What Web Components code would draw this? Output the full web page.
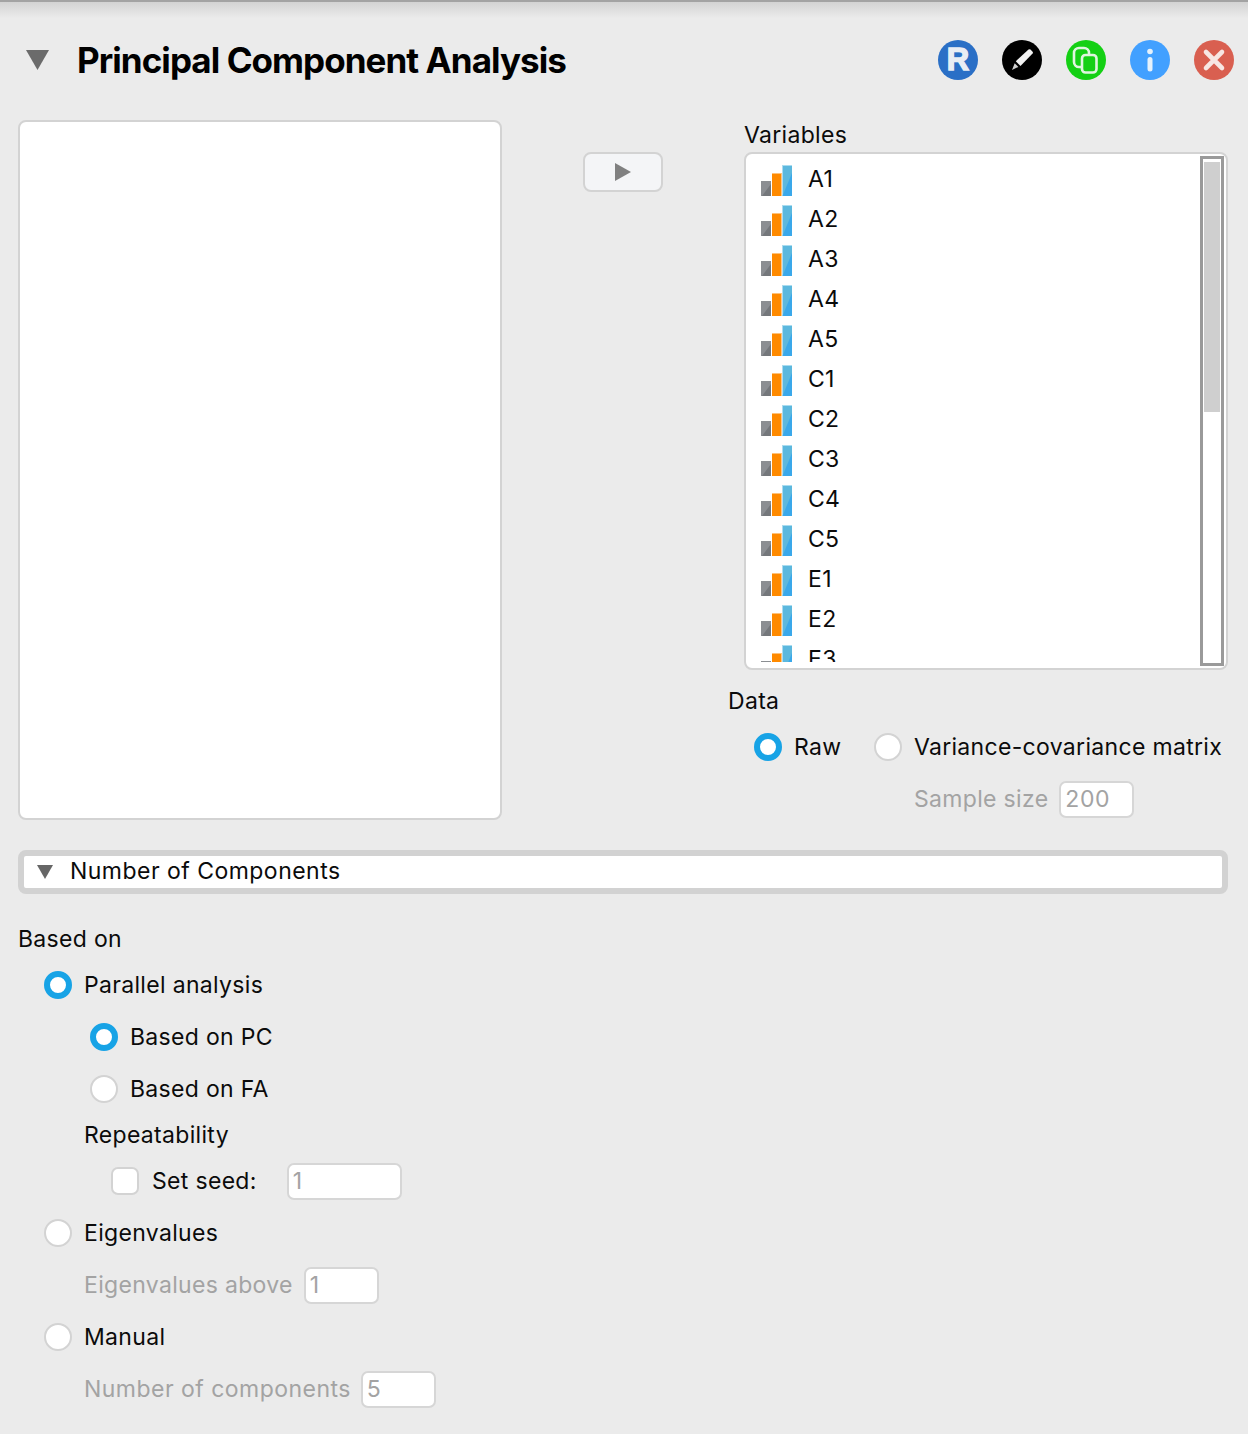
<!DOCTYPE html>
<html>
<head>
<meta charset="utf-8">
<title>Principal Component Analysis</title>
<style>
	html, body { margin: 0; padding: 0; }
	body {
		background: #ebebeb;
		color: #0b0b0b;
		font-family: Inter, "Liberation Sans", sans-serif;
		font-size: 23px;
		height: 1434px;
		overflow: hidden;
	}
</style>
</head>
<body>
<pca-analysis title-text="Principal Component Analysis">
	<pca-var slot="vars">A1</pca-var>
	<pca-var slot="vars">A2</pca-var>
	<pca-var slot="vars">A3</pca-var>
	<pca-var slot="vars">A4</pca-var>
	<pca-var slot="vars">A5</pca-var>
	<pca-var slot="vars">C1</pca-var>
	<pca-var slot="vars">C2</pca-var>
	<pca-var slot="vars">C3</pca-var>
	<pca-var slot="vars">C4</pca-var>
	<pca-var slot="vars">C5</pca-var>
	<pca-var slot="vars">E1</pca-var>
	<pca-var slot="vars">E2</pca-var>
	<pca-var slot="vars">E3</pca-var>

	<pca-row slot="form" kind="label" indent="0">Based on</pca-row>
	<pca-row slot="form" indent="26"><pca-radio checked>Parallel analysis</pca-radio></pca-row>
	<pca-row slot="form" indent="72"><pca-radio checked>Based on PC</pca-radio></pca-row>
	<pca-row slot="form" indent="72"><pca-radio>Based on FA</pca-radio></pca-row>
	<pca-row slot="form" kind="label" indent="66">Repeatability</pca-row>
	<pca-row slot="form" indent="93"><pca-check>Set seed:</pca-check><pca-field value="1" width="115" gap="30"></pca-field></pca-row>
	<pca-row slot="form" indent="26"><pca-radio>Eigenvalues</pca-radio></pca-row>
	<pca-row slot="form" indent="66"><pca-hint>Eigenvalues above</pca-hint><pca-field value="1" width="75" gap="11"></pca-field></pca-row>
	<pca-row slot="form" indent="26"><pca-radio>Manual</pca-radio></pca-row>
	<pca-row slot="form" indent="66"><pca-hint style="letter-spacing:0.47px">Number of components</pca-hint><pca-field value="5" width="75" gap="10"></pca-field></pca-row>
</pca-analysis>

<script>
const TEXT_STYLE = `letter-spacing: 0.32px; line-height: 30px;`;

class PcaVar extends HTMLElement {
	constructor() {
		super();
		this.attachShadow({ mode: 'open' });
		this.shadowRoot.innerHTML = `
		<style>
			:host { display: flex; align-items: center; height: 40px; flex: none; }
			svg { width: 31px; height: 31px; margin-left: 15px; margin-right: 16px; flex: none; }
			span { letter-spacing: 0.32px; line-height: 28px; padding-bottom: 2px; }
		</style>
		<svg viewBox="0 0 31 31">
			<rect x="0" y="16" width="10" height="15" fill="#8b8e92"/>
			<path d="M1 31 L10 19 V31Z" fill="#74777b"/>
			<rect x="11" y="8" width="9.5" height="23" fill="#ff8a00"/>
			<rect x="11" y="8" width="9.5" height="1" fill="#ffc27a"/>
			<rect x="21.5" y="0" width="9.5" height="31" fill="#5cb8de"/>
			<path d="M21.5 31 L31 8 V31Z" fill="#3aa8ea"/>
			<rect x="21.5" y="0" width="9.5" height="1" fill="#a9dcf0"/>
		</svg>
		<span><slot></slot></span>
		`;
	}
}
customElements.define('pca-var', PcaVar);

class PcaRadio extends HTMLElement {
	constructor() {
		super();
		this.attachShadow({ mode: 'open' });
		this.shadowRoot.innerHTML = `
		<style>
			:host { display: inline-flex; align-items: center; gap: 12px; }
			i { width: 28px; height: 28px; box-sizing: border-box; border-radius: 50%; background: #fff; border: 2px solid #d3d3d3; flex: none; }
			:host([checked]) i { border: 6.5px solid #17a3e6; }
			span { ${TEXT_STYLE} white-space: nowrap; }
		</style>
		<i></i><span><slot></slot></span>
		`;
	}
}
customElements.define('pca-radio', PcaRadio);

class PcaCheck extends HTMLElement {
	constructor() {
		super();
		this.attachShadow({ mode: 'open' });
		this.shadowRoot.innerHTML = `
		<style>
			:host { display: inline-flex; align-items: center; gap: 13px; }
			i { width: 28px; height: 28px; box-sizing: border-box; border-radius: 7px; background: #fff; border: 2px solid #d3d3d3; flex: none; }
			span { ${TEXT_STYLE} white-space: nowrap; }
		</style>
		<i></i><span><slot></slot></span>
		`;
	}
}
customElements.define('pca-check', PcaCheck);

class PcaHint extends HTMLElement {
	constructor() {
		super();
		this.attachShadow({ mode: 'open' });
		this.shadowRoot.innerHTML = `
		<style>
			:host { display: inline-block; color: #a3a3a3; white-space: nowrap; ${TEXT_STYLE} }
		</style>
		<slot></slot>
		`;
	}
}
customElements.define('pca-hint', PcaHint);

class PcaField extends HTMLElement {
	constructor() {
		super();
		this.attachShadow({ mode: 'open' });
	}
	connectedCallback() {
		const width = this.getAttribute('width') || 75;
		const gap = this.getAttribute('gap') || 11;
		this.shadowRoot.innerHTML = `
		<style>
			:host { display: inline-block; flex: none; margin-left: ${gap}px; }
			div {
				box-sizing: border-box;
				width: ${width}px;
				height: 37px;
				padding-left: 4px;
				background: #fff;
				border: 2px solid #d6d6d6;
				border-radius: 7px;
				color: #a3a3a3;
				line-height: 33px;
				letter-spacing: 0.5px;
			}
		</style>
		<div>${this.getAttribute('value') || ''}</div>
		`;
	}
}
customElements.define('pca-field', PcaField);

class PcaRow extends HTMLElement {
	constructor() {
		super();
		this.attachShadow({ mode: 'open' });
		this.shadowRoot.innerHTML = `
		<style>
			:host { display: flex; align-items: center; height: 40px; flex: none; ${TEXT_STYLE} }
			:host([kind="label"]) { height: 28px; }
		</style>
		<slot></slot>
		`;
	}
	connectedCallback() {
		this.style.paddingLeft = (this.getAttribute('indent') || 0) + 'px';
	}
}
customElements.define('pca-row', PcaRow);

class PcaIcon extends HTMLElement {
	constructor() {
		super();
		this.attachShadow({ mode: 'open' });
		this.shadowRoot.innerHTML = `
		<style>
			:host { display: flex; align-items: center; justify-content: center; width: 40px; height: 40px; border-radius: 50%; flex: none; background: var(--bg); overflow: hidden; }
			::slotted(svg) { width: 40px; height: 40px; display: block; }
			::slotted(span) { color: #e9edf4; font: 900 31px/40px "Liberation Sans", sans-serif; -webkit-text-stroke: 1.4px #e9edf4; }
		</style>
		<slot></slot>
		`;
	}
}
customElements.define('pca-icon', PcaIcon);

class PcaHeader extends HTMLElement {
	constructor() {
		super();
		this.attachShadow({ mode: 'open' });
		this.shadowRoot.innerHTML = `
		<style>
			:host {
				display: flex;
				align-items: center;
				height: 120px;
				padding: 0 14px 0 26px;
				box-sizing: border-box;
				border-top: 2px solid #a3a3a3;
				background: linear-gradient(#d3d3d3 0, #ebebeb 16px) no-repeat;
			}
			.arrow { width: 23px; height: 20px; flex: none; margin-top: -2px; }
			h1 { margin: -2px 0 0 28px; font-size: 35px; font-weight: 700; letter-spacing: -0.94px; line-height: 44px; color: #000; flex: 1; }
			.icons { display: flex; gap: 24px; margin-top: -2px; }
		</style>
		<svg class="arrow" viewBox="0 0 23 20"><path d="M0 0H23L11.5 20Z" fill="#6b6b6b"/></svg>
		<h1><slot name="title"></slot></h1>
		<div class="icons"><slot></slot></div>
		`;
	}
}
customElements.define('pca-header', PcaHeader);

class PcaBar extends HTMLElement {
	constructor() {
		super();
		this.attachShadow({ mode: 'open' });
		this.shadowRoot.innerHTML = `
		<style>
			:host {
				display: flex;
				align-items: center;
				box-sizing: border-box;
				height: 44px;
				background: #fff;
				border: 6px solid #d2d2d2;
				border-radius: 8px;
				letter-spacing: 0.47px;
				line-height: 28px;
			}
			svg { width: 16px; height: 14px; margin-left: 13px; margin-right: 17px; flex: none; }
			span { padding-bottom: 2px; }
		</style>
		<svg viewBox="0 0 16 14"><path d="M0 0H16L8 14Z" fill="#666"/></svg>
		<span><slot></slot></span>
		`;
	}
}
customElements.define('pca-bar', PcaBar);

class PcaAnalysis extends HTMLElement {
	constructor() {
		super();
		this.attachShadow({ mode: 'open' });
		this.shadowRoot.innerHTML = `
		<style>
			:host { display: block; ${TEXT_STYLE} }
			.top { display: flex; padding: 0 20px 0 18px; }
			.source {
				box-sizing: border-box;
				width: 484px;
				height: 700px;
				flex: none;
				background: #fff;
				border: 2px solid #d3d3d3;
				border-radius: 8px;
			}
			.middle { width: 226px; flex: none; padding: 32px 0 0 81px; box-sizing: border-box; }
			.move {
				box-sizing: border-box;
				display: flex;
				align-items: center;
				justify-content: center;
				width: 80px;
				height: 40px;
				background: #f4f5f7;
				border: 2px solid #d3d3d3;
				border-radius: 8px;
			}
			.move svg { width: 16px; height: 18px; }
			.right { width: 500px; flex: none; display: flex; flex-direction: column; }
			.caption { height: 32px; line-height: 30px; margin-left: 16px; }
			.list {
				box-sizing: border-box;
				margin-left: 16px;
				width: 484px;
				height: 518px;
				display: flex;
				align-items: flex-start;
				background: #fff;
				border: 2px solid #d3d3d3;
				border-radius: 8px;
				padding: 6px 0;
			}
			.items { flex: 1; height: 100%; overflow: hidden; display: flex; flex-direction: column; }
			.scroll {
				box-sizing: border-box;
				width: 24px;
				height: 510px;
				margin: -4px 2px 0 0;
				padding: 3px 1px;
				flex: none;
				border: 3px solid #9a9a9a;
			}
			.thumb { height: 250px; background: #cfcfcf; }
			.data { margin-top: 17px; display: flex; flex-direction: column; gap: 12px; }
			.data-row { display: flex; align-items: center; height: 40px; }
			.data-label { height: 28px; line-height: 28px; }
			.options { padding-left: 26px; gap: 32.5px; }
			.sample { padding-left: 186px; }
			.section { padding: 30px 20px 0 18px; }
			.form { margin-top: 31px; padding-left: 18px; padding-right: 20px; display: flex; flex-direction: column; gap: 12px; }
		</style>
		<pca-header>
			<span slot="title">${this.getAttribute('title-text')}</span>
			<pca-icon style="--bg:#2a6fc6"><span>R</span></pca-icon>
			<pca-icon style="--bg:#000">
				<svg viewBox="0 0 40 40"><path d="M26.5 9.6 Q27.6 8.9 28.5 9.6 L30.6 11.7 Q31.3 12.6 30.6 13.5 L18.5 26 L13.8 21.3Z" fill="#f2f2f2"/><path d="M12.7 23.2 L16.4 26.9 L10 30Z" fill="#cfcfcf"/></svg>
			</pca-icon>
			<pca-icon style="--bg:#14d014">
				<svg viewBox="0 0 40 40" fill="none" stroke="#dff5df" stroke-width="2.6"><rect x="8" y="8" width="15" height="19" rx="5"/><rect x="16" y="15" width="14.5" height="17.5" rx="3.5" fill="#14d014"/></svg>
			</pca-icon>
			<pca-icon style="--bg:#42a0ff">
				<svg viewBox="0 0 40 40"><circle cx="20" cy="11.5" r="2.8" fill="#e6f1fb"/><rect x="17.5" y="17" width="5" height="14.5" rx="2.5" fill="#e6f1fb"/></svg>
			</pca-icon>
			<pca-icon style="--bg:#d95f50">
				<svg viewBox="0 0 40 40"><path d="M12 12 L28 28 M28 12 L12 28" stroke="#f7e6e3" stroke-width="4.6" stroke-linecap="round"/></svg>
			</pca-icon>
		</pca-header>
		<div class="top">
			<div class="source"></div>
			<div class="middle">
				<div class="move"><svg viewBox="0 0 16 18"><path d="M0 0L16 9L0 18Z" fill="#808080"/></svg></div>
			</div>
			<div class="right">
				<div class="caption">Variables</div>
				<div class="list">
					<div class="items"><slot name="vars"></slot></div>
					<div class="scroll"><div class="thumb"></div></div>
				</div>
				<div class="data">
					<div class="data-label">Data</div>
					<div class="data-row options"><pca-radio checked>Raw</pca-radio><pca-radio>Variance-covariance matrix</pca-radio></div>
					<div class="data-row sample"><pca-hint>Sample size</pca-hint><pca-field value="200" width="75" gap="11"></pca-field></div>
				</div>
			</div>
		</div>
		<div class="section"><pca-bar>Number of Components</pca-bar></div>
		<div class="form"><slot name="form"></slot></div>
		`;
	}
}
customElements.define('pca-analysis', PcaAnalysis);
</script>
</body>
</html>
